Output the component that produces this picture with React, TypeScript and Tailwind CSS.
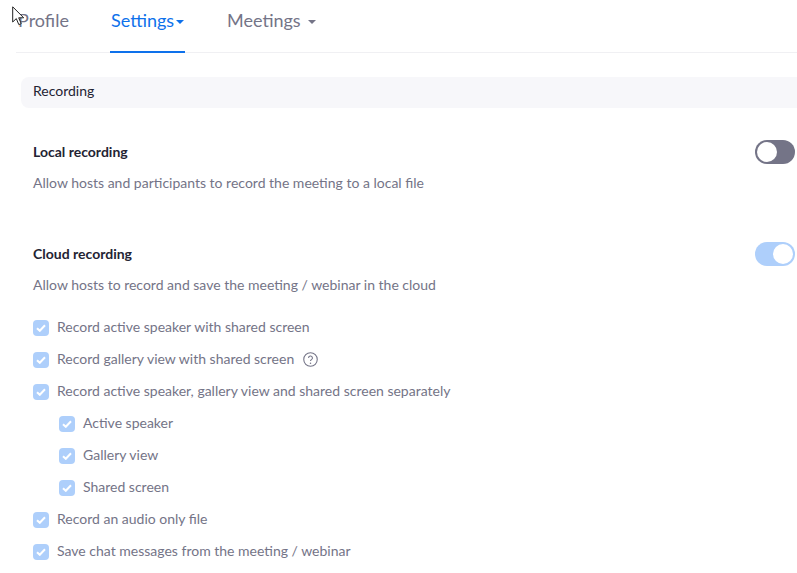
function Caret({ className }: { className: string }) {
  return <span className={`inline-block w-0 h-0 border-x-[4px] border-x-transparent border-t-[4px] ${className}`} />;
}

function Toggle({ on }: { on: boolean }) {
  return (
    <div className={`w-10 h-6 rounded-full flex items-center p-[2px] ${on ? "bg-[#aecffb] justify-end" : "bg-[#747487] justify-start"}`}>
      <div className="w-5 h-5 rounded-full bg-white" />
    </div>
  );
}

function Check({ label, help }: { label: string; help?: boolean }) {
  return (
    <div className="h-8 flex items-center">
      <div className="mt-[2px] w-4 h-4 rounded-[4px] bg-[#aecffb] flex items-center justify-center shrink-0">
        <svg width="10" height="8" viewBox="0 0 10 8" fill="none">
          <path d="M1 4.2 3.8 6.8 9 1.2" stroke="#fff" strokeWidth="2" />
        </svg>
      </div>
      <span className="ml-2 mb-[2px] text-[14px] text-[#747487]">{label}</span>
      {help && (
        <svg className="ml-[9px]" width="15" height="15" viewBox="0 0 14 14" fill="none">
          <circle cx="7" cy="7" r="6.3" stroke="#747487" strokeWidth="1" />
          <path d="M5.2 5.6a1.8 1.8 0 1 1 2.7 1.5c-.6.4-.9.7-.9 1.3" stroke="#747487" strokeWidth="1" />
          <circle cx="7" cy="10.4" r=".7" fill="#747487" />
        </svg>
      )}
    </div>
  );
}

export default function App() {
  return (
    <div className="relative w-[797px] h-[573px] overflow-hidden bg-white font-['Lato',sans-serif]">
      {/* Tabs */}
      <div className="ml-4 h-[53px] flex border-b border-[#f0f0f3]">
        <div className="h-[53px] w-[94px] pt-[7px] pl-[2px] text-[18px] text-[#747487]">Profile</div>
        <div className="h-[53px] w-[75px] pt-[7px] pl-px text-[18px] text-[#0e71eb] border-b-2 border-[#0e71eb] flex items-start">
          <span>Settings</span>
          <Caret className="ml-[2px] mt-[13px] border-t-[#0e71eb]" />
        </div>
        <div className="ml-[42px] h-[53px] pt-[7px] text-[18px] text-[#747487] flex items-start">
          <span>Meetings</span>
          <Caret className="ml-[7px] mt-[13px] border-t-[#747487]" />
        </div>
      </div>

      {/* Section header */}
      <div className="ml-[21px] mt-6 h-[31px] w-[800px] rounded-l-lg bg-[#f7f7fa] pl-3 pb-1 flex items-center text-[14px] text-[#232333]">
        Recording
      </div>

      <div className="pl-[33px] pr-[2px]">
        {/* Local recording */}
        <div className="mt-8 flex items-center justify-between h-6">
          <span className="mb-[2px] text-[14px] font-bold text-[#232333]">Local recording</span>
          <Toggle on={false} />
        </div>
        <div className="mt-[9px] text-[14px] leading-5 text-[#747487]">
          Allow hosts and participants to record the meeting to a local file
        </div>

        {/* Cloud recording */}
        <div className="mt-[49px] flex items-center justify-between h-6">
          <span className="mb-[2px] text-[14px] font-bold text-[#232333]">Cloud recording</span>
          <Toggle on />
        </div>
        <div className="mt-[9px] text-[14px] leading-5 text-[#747487]">
          Allow hosts to record and save the meeting / webinar in the cloud
        </div>

        <div className="mt-[16px]">
          <Check label="Record active speaker with shared screen" />
          <Check label="Record gallery view with shared screen" help />
          <Check label="Record active speaker, gallery view and shared screen separately" />
          <div className="pl-[26px]">
            <Check label="Active speaker" />
            <Check label="Gallery view" />
            <Check label="Shared screen" />
          </div>
          <Check label="Record an audio only file" />
          <Check label="Save chat messages from the meeting / webinar" />
        </div>
      </div>

      {/* Mouse cursor */}
      <svg className="absolute left-[12px] top-[6px]" width="15" height="20" viewBox="0 0 15 20" fill="none">
        <path d="M.7.8V16l3.6-3.4 2.5 6 2.4-1-2.5-5.8h5z" fill="#fff" stroke="#222" strokeWidth="1" />
      </svg>
    </div>
  );
}
